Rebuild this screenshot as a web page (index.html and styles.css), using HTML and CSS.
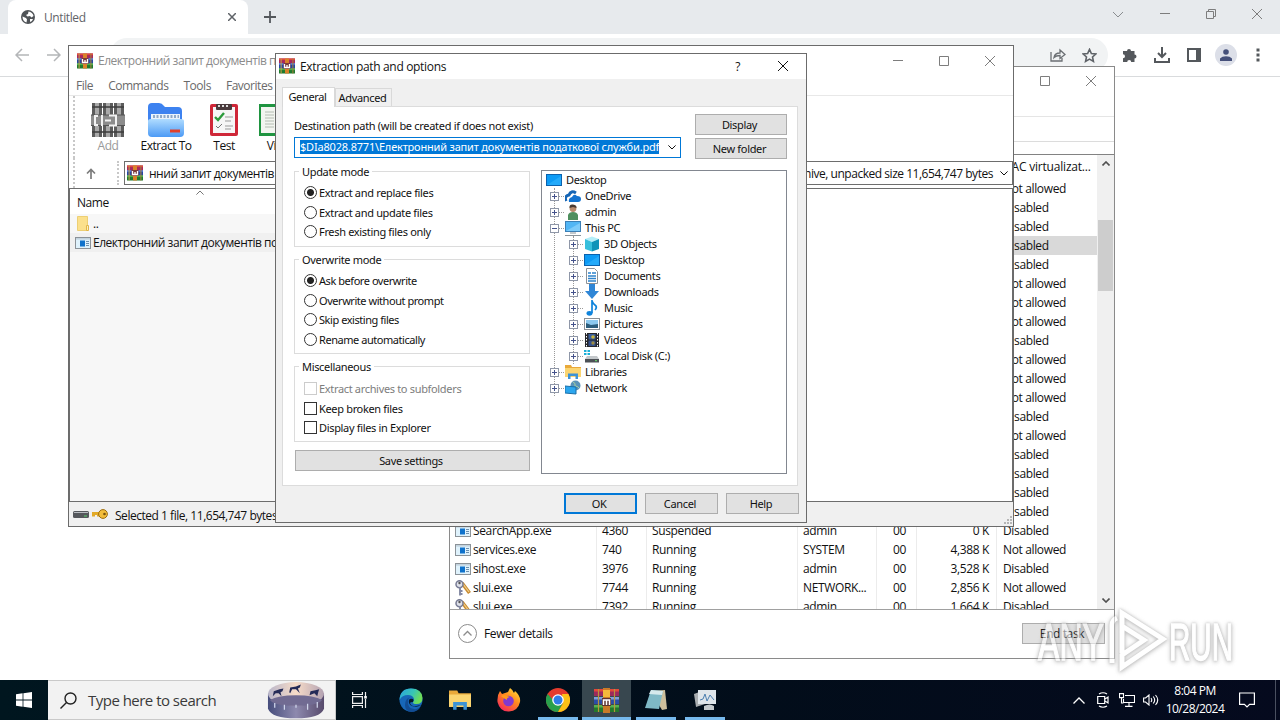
FILE: index.html
```html
<!DOCTYPE html>
<html lang="en">
<head>
  <meta charset="UTF-8">
  <title>Desktop</title>
  <link rel="stylesheet" href="styles.css">
</head>
<body>

  <!-- shared icons -->
  <svg class="defs" width="0" height="0">
    <symbol id="rar" viewBox="0 0 16 16">
      <rect width="16" height="5" y="0.5" fill="#a8285e"/><rect width="16" height="1.6" y="0.5" fill="#e04a3c"/>
      <rect width="16" height="5" y="5.5" fill="#2746a0"/><rect width="16" height="1.3" y="5.5" fill="#4f7fe0"/>
      <rect width="16" height="5" y="10.5" fill="#1f7a2e"/><rect width="16" height="1.6" y="10.5" fill="#4bb04c"/>
      <rect x="1.6" y="0.5" width="1" height="15" fill="#c9a24a"/>
      <rect x="13.4" y="0.5" width="1" height="15" fill="#a8823a"/>
      <rect x="6" y="0.5" width="4" height="15" fill="#d9822a"/>
      <rect x="4.500" y="5" width="7" height="6" fill="#7c3a3a"/>
      <path d="M5.500 6v3.500h5V6M8 7v2.500" fill="none" stroke="#fff" stroke-width="1.300"/>
    </symbol>
    <symbol id="exe" viewBox="0 0 16 12">
      <rect x=".5" y=".5" width="15" height="11" fill="#dff2fc" stroke="#8b9298"/>
      <rect x="1" y="1" width="14" height="1.6" fill="#c3d3de"/>
      <rect x="5" y="3.5" width="5" height="6" fill="#0f72cc"/>
      <path d="M11 4.5h3M11 6.5h3M11 8.5h3" stroke="#6d8fae"/>
    </symbol>
    <symbol id="keys" viewBox="0 0 16 16">
      <path d="M7 3l7.500 10" stroke="#c98a2e" stroke-width="3.600"/><path d="M8 4l6 8" stroke="#f0cf8c" stroke-width="1.200"/>
      <circle cx="4.500" cy="4.200" r="3.500" fill="#dfe1ea" stroke="#777b94" stroke-width="1.500"/><circle cx="4.500" cy="3" r="1.200" fill="#555"/>
      <path d="M5 7v8.500M5 11h2.500M5 14h2.500" stroke="#8388a3" stroke-width="1.900"/>
    </symbol>
    <symbol id="min" viewBox="0 0 10 10"><path d="M0 4.500h10" stroke="currentColor"/></symbol>
    <symbol id="max" viewBox="0 0 10 10"><path d="M.5.5h9v9h-9z" fill="none" stroke="currentColor"/></symbol>
    <symbol id="close" viewBox="0 0 10 10"><path d="M0 0l10 10M10 0L0 10" stroke="currentColor"/></symbol>
    <symbol id="down" viewBox="0 0 8 5"><path d="M.4.4L4 4 7.600.4" fill="none" stroke="currentColor"/></symbol>
    <symbol id="up" viewBox="0 0 8 5"><path d="M.4 4.600L4 1l3.600 3.600" fill="none" stroke="currentColor"/></symbol>
    <symbol id="monitor" viewBox="0 0 16 16"><rect x=".5" y="2.500" width="15" height="11" fill="#0d9bf5" stroke="#0b62ae"/><path d="M1 13L15 4v9z" fill="#24aafa"/></symbol>
    <symbol id="explorer" viewBox="0 0 16 16">
      <path d="M0 1h6l1 2h9v10H0z" fill="#e9a93a"/><path d="M0 4h16v9H0z" fill="#fbd571"/>
      <path d="M3 15V9.500h10V15h-2.500v-3h-5v3z" fill="#3d93d6"/>
    </symbol>
  </svg>

  <div class="desktop">

    <div class="browser">
      <div class="tabstrip">
        <div class="tab">
          <svg width="14" height="14" viewBox="0 0 14 14"><circle cx="7" cy="7" r="7" fill="#4f5357"/><path d="M1.500 6.500L5 8l1 1.500-.5 3C3 12 1.500 9.500 1.500 6.500zM7.500 1.500c2.500.2 4.700 2 5 4.500L10.500 7.500 9 6 6.500 6.500 5 5l2-1zM9 9h3c-.5 1.500-1.500 2.500-3 3z" fill="#fff"/></svg>
          <span>Untitled</span>
          <svg class="tab-close" width="8" height="8" viewBox="0 0 10 10"><path d="M0 0l10 10M10 0L0 10" stroke="#5f6368" stroke-width="1.900"/></svg>
        </div>
        <svg class="tab-new" width="12" height="12" viewBox="0 0 12 12"><path d="M6 0v12M0 6h12" stroke="#54585c" stroke-width="1.800"/></svg>
        <div class="controls">
          <svg width="12" height="7" viewBox="0 0 12 7"><path d="M1 1l5 5 5-5" fill="none" stroke="#8a8d90"/></svg>
          <svg width="10" height="10"><use href="#min"/></svg>
          <svg width="10" height="10" viewBox="0 0 10 10"><path d="M.5 2.500h7v7h-7zM2.500 2.500v-2h7v7h-2" fill="none" stroke="currentColor"/></svg>
          <svg width="10" height="10"><use href="#close"/></svg>
        </div>
      </div>
      <div class="toolbar">
        <svg class="nav" width="14" height="14" viewBox="0 0 14 14"><path d="M14 7H1.500M7 1L1 7l6 6" fill="none" stroke="#b4b6b8" stroke-width="1.500"/></svg>
        <svg class="nav" width="14" height="14" viewBox="0 0 14 14"><path d="M0 7h12.500M7 1l6 6-6 6" fill="none" stroke="#b4b6b8" stroke-width="1.500"/></svg>
        <div class="omnibox">
          <svg width="16" height="14" viewBox="0 0 16 14"><path d="M1 4v9h11v-3M4 9.500c.5-3 2.500-4.500 6-4.500V2l5 4.500-5 4V7.500C7 7.500 5.500 8 4 9.500z" fill="none" stroke="#6b6f73" stroke-width="1.300"/></svg>
          <svg width="15" height="15" viewBox="0 0 16 16"><path d="M8 1.500l2 4.400 4.800.5-3.600 3.200 1 4.700L8 11.900l-4.200 2.400 1-4.700L1.200 6.400 6 5.900z" fill="none" stroke="#5f6368" stroke-width="1.700"/></svg>
        </div>
        <svg class="ext" width="15" height="15" viewBox="0 0 15 15"><path d="M5 3a2 2 0 0 1 4 0h3.500v3.500a2 2 0 0 1 0 4V14H9.200a2 2 0 0 0-4 0H1v-3.800a2 2 0 0 0 0-4V3z" fill="#54585c"/></svg>
        <svg class="dl" width="16" height="16" viewBox="0 0 16 16"><path d="M8 0v10M4 6l4 4 4-4M1 11v4h14v-4" fill="none" stroke="#54585c" stroke-width="2"/></svg>
        <svg class="side" width="14" height="14" viewBox="0 0 14 14"><path d="M1 1h12v12H1z" fill="#fff" stroke="#54585c" stroke-width="2"/><path d="M9 1h4v12H9z" fill="#54585c"/></svg>
        <span class="avatar"><svg width="12" height="12" viewBox="0 0 12 12"><circle cx="6" cy="3" r="2.800" fill="#45507a"/><path d="M0 12V9.500Q2 7.300 6 7.300t6 2.200V12z" fill="#45507a"/></svg></span>
        <svg class="dots" width="4" height="14" viewBox="0 0 4 14"><path d="M.5.500h3v3h-3zM.5 5.500h3v3h-3zM.5 10.500h3v3h-3z" fill="#54585c"/></svg>
      </div>
    </div>

    <div class="window taskmgr">
      <div class="tm-title">
        <svg width="10" height="10"><use href="#max"/></svg>
        <svg width="10" height="10"><use href="#close"/></svg>
      </div>
      <div class="tm-menu"></div>
      <div class="tm-tabs"></div>
      <div class="tm-body">
        <div class="tm-list">
          <div class="row head"><span class="uac">UAC virtualizat...</span></div>
          <div class="row"><span class="uac">Not allowed</span></div>
          <div class="row"><span class="uac">Disabled</span></div>
          <div class="row"><span class="uac">Disabled</span></div>
          <div class="row selected"><span class="uac">Disabled</span></div>
          <div class="row"><span class="uac">Disabled</span></div>
          <div class="row"><span class="uac">Not allowed</span></div>
          <div class="row"><span class="uac">Not allowed</span></div>
          <div class="row"><span class="uac">Not allowed</span></div>
          <div class="row"><span class="uac">Disabled</span></div>
          <div class="row"><span class="uac">Not allowed</span></div>
          <div class="row"><span class="uac">Not allowed</span></div>
          <div class="row"><span class="uac">Not allowed</span></div>
          <div class="row"><span class="uac">Disabled</span></div>
          <div class="row"><span class="uac">Not allowed</span></div>
          <div class="row"><span class="uac">Disabled</span></div>
          <div class="row"><span class="uac">Disabled</span></div>
          <div class="row"><span class="uac">Disabled</span></div>
          <div class="row"><span class="uac">Disabled</span></div>
          <div class="row"><span><svg width="16" height="12"><use href="#exe"/></svg><b>SearchApp.exe</b></span><span>4360</span><span>Suspended</span><span>admin</span><span>00</span><span>0 K</span><span class="uac">Disabled</span></div>
          <div class="row"><span><svg width="16" height="12"><use href="#exe"/></svg><b>services.exe</b></span><span>740</span><span>Running</span><span>SYSTEM</span><span>00</span><span>4,388 K</span><span class="uac">Not allowed</span></div>
          <div class="row"><span><svg width="16" height="12"><use href="#exe"/></svg><b>sihost.exe</b></span><span>3976</span><span>Running</span><span>admin</span><span>00</span><span>3,528 K</span><span class="uac">Disabled</span></div>
          <div class="row"><span><svg width="16" height="16"><use href="#keys"/></svg><b>slui.exe</b></span><span>7744</span><span>Running</span><span>NETWORK...</span><span>00</span><span>2,856 K</span><span class="uac">Not allowed</span></div>
          <div class="row"><span><svg width="16" height="16"><use href="#keys"/></svg><b>slui.exe</b></span><span>7392</span><span>Running</span><span>admin</span><span>00</span><span>1,664 K</span><span class="uac">Disabled</span></div>
        </div>
        <div class="scrollbar">
          <svg width="8" height="5" viewBox="0 0 8 5"><path d="M.5 4.500L4 1l3.500 3.500" fill="none" stroke="#505050" stroke-width="1.600"/></svg>
          <div class="thumb"></div>
          <svg width="8" height="5" viewBox="0 0 8 5"><path d="M.5.500L4 4 7.500.5" fill="none" stroke="#505050" stroke-width="1.600"/></svg>
        </div>
      </div>
      <div class="tm-footer">
        <svg width="19" height="19" viewBox="0 0 19 19"><circle cx="9.500" cy="9.500" r="9" fill="none" stroke="#8c8c8c"/><path d="M5.500 11.500l4-4 4 4" fill="none" stroke="#8c8c8c" stroke-width="1.300"/></svg>
        <span>Fewer details</span>
        <button class="btn end-task">End task</button>
      </div>
    </div>

    <div class="window winrar">
      <div class="wr-title">
        <svg width="16" height="16"><use href="#rar"/></svg>
        <span>Електронний запит документів податкової служби.pdf</span>
        <div class="controls">
          <svg width="10" height="10"><use href="#min"/></svg>
          <svg width="10" height="10"><use href="#max"/></svg>
          <svg width="10" height="10"><use href="#close"/></svg>
        </div>
      </div>
      <div class="wr-menu"><span>File</span><span>Commands</span><span>Tools</span><span>Favorites</span></div>
      <div class="wr-tools">
        <div class="tool disabled">
          <svg width="34" height="34" viewBox="0 0 34 34">
            <path d="M1 0h10v34H1zM12 0h10v34H12zM23 0h10v34H23z" fill="#5c5c5c"/>
            <path d="M4 0h4v34H4zM15 0h4v34h-4zM26 0h4v34h-4z" fill="#a9a9a9"/>
            <path d="M1 4h32M1 29h32" stroke="#3c3c3c" stroke-width="1.500"/>
            <path d="M0 12h34v11H0z" fill="#8c8c8c"/><path d="M0 12h34M0 22.500h34" stroke="#555"/>
            <path d="M7 13H4v9h3M11 12v11M14 17.500h6M18 12.500h7v10h-7" fill="none" stroke="#f2f2f2" stroke-width="2"/>
          </svg>
          <span>Add</span>
        </div>
        <div class="tool">
          <svg width="36" height="34" viewBox="0 0 36 34">
            <defs><linearGradient id="fold" x2="0" y2="1"><stop stop-color="#b0dcff"/><stop offset="1" stop-color="#4c9af5"/></linearGradient></defs>
            <path d="M0 4q0-4 4-4h7q3 0 5 3l1 1h13q4 0 4 4v12H0z" fill="#3d82f0"/>
            <path d="M3 11h29v9H3z" fill="#eaf3fb"/><path d="M5 13.500h26" stroke="#8fa9c9" stroke-width="3" stroke-dasharray="2 1.500"/>
            <path d="M0 18q0-2 3-2h30q3 0 3 2v12q0 4-4 4H4q-4 0-4-4z" fill="url(#fold)"/>
            <path d="M22 26.500h10v3H22z" fill="#e0402c"/>
          </svg>
          <span>Extract To</span>
        </div>
        <div class="tool">
          <svg width="28" height="34" viewBox="0 0 28 34">
            <rect y="1" width="28" height="32" rx="2" fill="#cf2738"/><rect x="3" y="4" width="22" height="26" fill="#f6f6f6"/>
            <rect x="6" y="1" width="16" height="6" rx="1" fill="#4a3a3c"/><path d="M8 3h12" stroke="#ddd" stroke-width="2" stroke-dasharray="2 2"/>
            <path d="M5 14l3 3 6-7" fill="none" stroke="#2c9b3c" stroke-width="2.400"/>
            <path d="M15 14h8M15 18h6M15 23h8M15 26h6" stroke="#999"/><path d="M6 23l2 2 4-4" fill="none" stroke="#777"/>
          </svg>
          <span>Test</span>
        </div>
        <div class="tool narrow">
          <svg width="36" height="34" viewBox="0 0 36 34"><path d="M0 1h36v32H0z" fill="#1f9440"/><path d="M2 4h15v26H2zM19 4h15v26H19z" fill="#f3f5f0"/><path d="M6 9h9M6 12h9M6 15h9M6 18h9M6 21h9M6 24h9" stroke="#b4bcb2"/></svg>
          <span>View</span>
        </div>
      </div>
      <div class="wr-address">
        <svg width="10" height="11" viewBox="0 0 10 11"><path d="M5 11V1.500M1 5.500l4-4 4 4" fill="none" stroke="#7c7c7c" stroke-width="1.700"/></svg>
        <i class="sep"></i>
        <div class="path">
          <svg width="16" height="16"><use href="#rar"/></svg>
          <span class="path-left">нний запит документів</span>
          <span class="path-right">archive, unpacked size 11,654,747 bytes</span>
          <svg class="caret" width="8" height="5"><use href="#down"/></svg>
        </div>
      </div>
      <div class="wr-list">
        <svg class="sort" width="8" height="5"><use href="#up"/></svg>
        <div class="wr-head">Name</div>
        <div class="wr-col">
          <div class="file"><svg width="16" height="16" viewBox="0 0 16 16"><path d="M2.500.5h10v14h-10z" fill="#fbe08c" stroke="#edcf74"/><path d="M11.500 9.500h2v5h-2z" fill="#fff0b8" stroke="#e0b54a"/></svg>..</div>
          <div class="file picked"><svg width="16" height="12"><use href="#exe"/></svg>Електронний запит документів податкової служби.exe</div>
        </div>
      </div>
      <div class="wr-status">
        <svg width="16" height="7" viewBox="0 0 16 7"><rect width="16" height="7" rx="1.500" fill="#55585c"/><path d="M1 1.500h14" stroke="#b9bdc2"/><path d="M11 5h3" stroke="#5bd36a"/></svg>
        <svg width="16" height="10" viewBox="0 0 16 10"><path d="M0 3h9v3H7v1.500H5V6H3v1.500H0z" fill="#e2aa28"/><circle cx="11" cy="5" r="4.400" fill="#f2bd3a" stroke="#9c6d12"/><circle cx="12.500" cy="5" r="1.300" fill="#7a5410"/></svg>
        <span>Selected 1 file, 11,654,747 bytes</span>
        <svg class="grip" width="9" height="9" viewBox="0 0 9 9"><path d="M7 0h2v2H7zM7 3h2v2H7zM7 6h2v2H7zM4 3h2v2H4zM4 6h2v2H4zM1 6h2v2H1z" fill="#b5b5b5"/></svg>
      </div>
    </div>

    <div class="window dialog">
      <div class="dlg-title">
        <svg width="16" height="16"><use href="#rar"/></svg>
        <span>Extraction path and options</span>
        <span class="help">?</span>
        <svg width="10" height="10"><use href="#close"/></svg>
      </div>
      <div class="dlg-tabs"><span class="active">General</span><span>Advanced</span></div>
      <div class="dlg-panel">
        <div class="dest">
          <div class="dest-field">
            <label>Destination path (will be created if does not exist)</label>
            <div class="combo"><span class="sel">$DIa8028.8771\Електронний запит документів податкової служби.pdf</span><svg width="8" height="5"><use href="#down"/></svg></div>
          </div>
          <div class="dest-buttons">
            <button class="btn">Display</button>
            <button class="btn">New folder</button>
          </div>
        </div>
        <div class="columns">
          <div class="options">
            <fieldset>
              <legend>Update mode</legend>
              <div class="opt"><i class="radio on"></i>Extract and replace files</div>
              <div class="opt"><i class="radio"></i>Extract and update files</div>
              <div class="opt"><i class="radio"></i>Fresh existing files only</div>
            </fieldset>
            <fieldset>
              <legend>Overwrite mode</legend>
              <div class="opt"><i class="radio on"></i>Ask before overwrite</div>
              <div class="opt"><i class="radio"></i>Overwrite without prompt</div>
              <div class="opt"><i class="radio"></i>Skip existing files</div>
              <div class="opt"><i class="radio"></i>Rename automatically</div>
            </fieldset>
            <fieldset>
              <legend>Miscellaneous</legend>
              <div class="opt off"><i class="check"></i>Extract archives to subfolders</div>
              <div class="opt"><i class="check"></i>Keep broken files</div>
              <div class="opt"><i class="check"></i>Display files in Explorer</div>
            </fieldset>
            <button class="btn save">Save settings</button>
          </div>
          <div class="tree">
            <div class="node root"><svg width="16" height="16"><use href="#monitor"/></svg><span>Desktop</span></div>
            <div class="branch">
              <div class="node"><i class="box plus"></i><svg width="16" height="16" viewBox="0 0 16 16"><path d="M1 13q-2-5 3-6 2-5 7-2" fill="none" stroke="#1565b5" stroke-width="3"/><path d="M4 14q-1-4 3-5 2-4 5-1 4 0 4 3 0 3-3 3z" fill="#1272cf"/></svg><span>OneDrive</span></div>
              <div class="node"><i class="box plus"></i><svg width="16" height="16" viewBox="0 0 16 16"><path d="M3 16V11q1-3 5-3t5 3v5z" fill="#4f8f5e"/><circle cx="8" cy="4.500" r="3.400" fill="#b98a6c"/><path d="M4.500 4Q4 0 8 .5T11.500 4L8 3z" fill="#4a3a30"/></svg><span>admin</span></div>
              <div class="node"><i class="box"></i><svg width="16" height="16" viewBox="0 0 16 16"><rect x=".5" y="1.500" width="15" height="10" fill="#52b6f5" stroke="#3c7fb5"/><path d="M1 11L15 3v8z" fill="#7dcbfa"/><path d="M0 15.500h16M5 13h6" stroke="#8a9399"/></svg><span>This PC</span></div>
              <div class="branch inner">
                <div class="node"><i class="box plus"></i><svg width="16" height="16" viewBox="0 0 16 16"><path d="M1 3l7-2.500L15 3 8 6z" fill="#b4eef8"/><path d="M1 3l7 3v9.500L1 13z" fill="#37bfdc"/><path d="M15 3L8 6v9.500l7-2.500z" fill="#0f93b8"/></svg><span>3D Objects</span></div>
                <div class="node"><i class="box plus"></i><svg width="16" height="16"><use href="#monitor"/></svg><span>Desktop</span></div>
                <div class="node"><i class="box plus"></i><svg width="16" height="16" viewBox="0 0 16 16"><path d="M2.500.5h8l3 3v12h-11z" fill="#fff" stroke="#8c9196"/><path d="M4 5h3M4 8h8M4 10.500h8M4 13h8M8 5h4" stroke="#2d82cc" stroke-width="1.300"/></svg><span>Documents</span></div>
                <div class="node"><i class="box plus"></i><svg width="16" height="16" viewBox="0 0 16 16"><path d="M5 0h6v7h4l-7 8-7-8h4z" fill="#2f86d6"/></svg><span>Downloads</span></div>
                <div class="node"><i class="box plus"></i><svg width="16" height="16" viewBox="0 0 16 16"><path d="M8 0v13M8 1q1 3 4 5 1 2-1 4" fill="none" stroke="#0f84dc" stroke-width="1.700"/><ellipse cx="5.500" cy="13.300" rx="3" ry="2.400" fill="#0f84dc"/></svg><span>Music</span></div>
                <div class="node"><i class="box plus"></i><svg width="16" height="16" viewBox="0 0 16 16"><rect x=".5" y="2.500" width="15" height="11" fill="#fff" stroke="#8c9196"/><rect x="2" y="4" width="12" height="8" fill="#8cc8ee"/><path d="M2 12V7l5 2 7-1v4z" fill="#2c5d7c"/></svg><span>Pictures</span></div>
                <div class="node"><i class="box plus"></i><svg width="16" height="16" viewBox="0 0 16 16"><rect x="1" y="1" width="14" height="14" fill="#26262a"/><path d="M2.500 1v14M13.500 1v14" stroke="#fff" stroke-dasharray="1.500 1.500"/><path d="M4.500 2h7v5.500h-7z" fill="#3a5e9c"/><path d="M4.500 8.500h7V14h-7z" fill="#35508a"/><circle cx="9" cy="5" r="1.800" fill="#c9b53c"/><circle cx="9" cy="11" r="1.700" fill="#9c8c44"/></svg><span>Videos</span></div>
                <div class="node"><i class="box plus"></i><svg width="16" height="16" viewBox="0 0 16 16"><path d="M0 2h2.500v2H0zM3.500 2H6v2H3.500zM0 5h2.500v2H0zM3.500 5H6v2H3.500z" fill="#1cb0d8"/><path d="M3 8h10l2 3H1z" fill="#c4c8cb"/><path d="M1 11h14v3.500H1z" fill="#4c5156"/><path d="M11 12.700h2" stroke="#68e06e"/></svg><span>Local Disk (C:)</span></div>
              </div>
              <div class="node"><i class="box plus"></i><svg width="16" height="16"><use href="#explorer"/></svg><span>Libraries</span></div>
              <div class="node last"><i class="box plus"></i><svg width="16" height="16" viewBox="0 0 16 16"><circle cx="10.500" cy="5.500" r="5" fill="#5a93b8"/><path d="M8 2q3 1 2 4 3 0 4 2" stroke="#a9d0a0" fill="none"/><path d="M0 6l11 1v7L0 13z" fill="#2ba6ee" stroke="#1b6ea8"/></svg><span>Network</span></div>
            </div>
          </div>
        </div>
      </div>
      <div class="dlg-buttons">
        <button class="btn primary">OK</button>
        <button class="btn">Cancel</button>
        <button class="btn">Help</button>
      </div>
    </div>

    <svg class="watermark" width="200" height="66" viewBox="0 0 200 66">
      <g class="wm-text">
        <text x="2" y="53" textLength="66" lengthAdjust="spacingAndGlyphs">ANY</text>
        <text x="133" y="53" textLength="64" lengthAdjust="spacingAndGlyphs">RUN</text>
      </g>
      <path d="M76 56V18q0-5 5-7M86 46V6l41 26-41 28V48l22-15-22-14" fill="none" stroke="#fff" stroke-width="5"/>
    </svg>

    <div class="taskbar">
      <div class="start"><svg width="16" height="16" viewBox="0 0 16 16"><path d="M0 2.200L6.600 1.300v6.300H0zM7.400 1.200L16 0v7.600H7.400zM0 8.400h6.600v6.300L0 13.800zM7.400 8.400H16V16l-8.600-1.200z" fill="#fff"/></svg></div>
      <div class="search">
        <svg width="17" height="17" viewBox="0 0 17 17"><circle cx="10.500" cy="6.500" r="5.500" fill="none" stroke="#222" stroke-width="1.400"/><path d="M6.500 10.500L.5 16.500" stroke="#222" stroke-width="1.400"/></svg>
        <span>Type here to search</span>
        <svg class="bowl" width="58" height="38" viewBox="0 0 60 38">
          <defs><linearGradient id="ice"><stop stop-color="#464d7c"/><stop offset=".5" stop-color="#8d89ae"/><stop offset="1" stop-color="#574a6c"/></linearGradient><linearGradient id="rim"><stop stop-color="#b9b6ca"/><stop offset=".5" stop-color="#f7dcc8"/><stop offset="1" stop-color="#b3a2b2"/></linearGradient></defs>
          <path d="M1 12v16q4 10 29 10t29-10V12z" fill="url(#ice)"/>
          <ellipse cx="30" cy="12.500" rx="29" ry="12" fill="url(#rim)"/>
          <path d="M3 19q8-5 27-5t27 5q-4 6-27 6T3 19z" fill="#716b92"/>
          <path d="M8 22v5M18 24v5M30 24v3M42 23v6M52 21v6" stroke="#cfd5ea" stroke-width="1.300"/>
          <path d="M6 15l1-5 6-2 4-1-1 3-2 1 1 4-3-3h-3zM23 11l1-5 6-1 5-2-1 3-2 1 2 5-4-4h-4l-2 4zM44 14l1-4 5-1 4-1-1 3-1 4-3-3z" fill="#252b57"/>
        </svg>
      </div>
      <div class="apps">
        <div class="app"><svg width="16" height="16" viewBox="0 0 16 16"><path d="M.6 0v2.500h9.800V0M.6 16v-2.500h9.800V16M.6 4.600h9.800v6.800H.6zM13.500 0v4M13.500 7v9" fill="none" stroke="#eee" stroke-width="1.200"/><path d="M12.200 4h2.600v2.600h-2.600z" fill="#fff"/></svg></div>
        <div class="app"><svg width="24" height="24" viewBox="0 0 24 24">
          <defs><linearGradient id="edge" x2="1" y2=".4"><stop stop-color="#2aa4e2"/><stop offset=".6" stop-color="#38c5b4"/><stop offset="1" stop-color="#6edd58"/></linearGradient></defs>
          <circle cx="12" cy="12" r="11.500" fill="#1767b8"/><path d="M.5 12Q1 .5 12 .5T23.500 10q0 6-6 6-4 0-3.500-2 1.500-1 1-3-1-4-6-4-6 0-8.500 5z" fill="url(#edge)"/>
          <path d="M9 13q-1 7 6 8 4 1 7-3-3 6-10 6-6-1-6-7t5-8q-2 1-2 4z" fill="#124d94"/><path d="M14 14q-3 0-3 1 1 5 11 2-4 3-9 1-4-2-3-6 1-2 4-1 1 1 0 3z" fill="#04182a"/></svg></div>
        <div class="app"><svg width="22" height="22"><use href="#explorer"/></svg></div>
        <div class="app"><svg width="24" height="24" viewBox="0 0 24 24">
          <defs><linearGradient id="fox" x1=".9" y1="0" x2=".2" y2="1"><stop stop-color="#ffe33c"/><stop offset=".45" stop-color="#ff8a1e"/><stop offset="1" stop-color="#f5245e"/></linearGradient></defs>
          <path d="M3 3l2 3 3-1 3-1 2-4q3 2 4 5l1-2q6 5 5 11-2 9-11 9.500T.5 14Q0 7 3 3z" fill="url(#fox)"/><circle cx="11.500" cy="13" r="5.300" fill="#8239cf"/><path d="M4 8q3-2 6 0l3 1q-4 1-3 3-5-3-6-4z" fill="#ff9a1c"/></svg></div>
        <div class="app open"><svg width="24" height="24" viewBox="0 0 24 24"><circle cx="12" cy="12" r="12" fill="#e33b2e"/><path d="M1.600 6A12 12 0 0 0 12 24l5-9-5 2z" fill="#29a04c"/><path d="M22.400 6A12 12 0 0 1 12 24l5.200-9L16 6z" fill="#fbc116"/><circle cx="12" cy="12" r="5.800" fill="#fff"/><circle cx="12" cy="12" r="4.500" fill="#2f7de8"/></svg></div>
        <div class="app open current"><svg width="25" height="25" viewBox="0 0 25 25">
          <path d="M0 1h25v7H0z" fill="#9c2a5c"/><path d="M0 1h25v2.500H0z" fill="#e2473a"/><path d="M0 9h25v7H0z" fill="#2c4da6"/><path d="M0 9h25v2.500H0z" fill="#7f9fd8"/><path d="M0 17h25v7H0z" fill="#23782c"/><path d="M0 17h25v2.500H0z" fill="#55b14e"/>
          <path d="M4.500 1v23M20.500 1v23" stroke="#b8943e" stroke-width="1.200"/>
          <path d="M9 0h7v25H9z" fill="#c97a28"/><path d="M9 2h7v7H9z" fill="#f3b93c"/><path d="M8 10h9v8H8z" fill="#5d3330"/>
          <path d="M9.500 17v-5h6v5M12.500 12v5" fill="none" stroke="#fff" stroke-width="1.500"/></svg></div>
        <div class="app open"><svg width="24" height="22" viewBox="0 0 24 22"><path d="M7 2l14-1 2 19-5 1z" fill="#cdbf9c"/><path d="M7 1l12 1-4 18L1 19z" fill="#7fb9c6"/><path d="M7 1l12 1-1 4L5 5z" fill="#d5e9ec"/></svg></div>
        <div class="app open"><svg width="24" height="22" viewBox="0 0 24 22"><path d="M1 5l8-3 3 13-9 3z" fill="#a9adb0"/><path d="M5 1h18v14H5z" fill="#dfe5ea"/><path d="M7 11l3-1 2-5 2 7 3-6 4 5" fill="none" stroke="#4c7fb0"/><path d="M11 17q6-3 10 0v4H11z" fill="#c5cacd"/></svg></div>
      </div>
      <div class="tray">
        <svg width="12" height="7" viewBox="0 0 12 7"><path d="M.5 6.500L6 1l5.500 5.500" fill="none" stroke="#fff" stroke-width="1.300"/></svg>
        <svg width="12" height="16" viewBox="0 0 12 16"><path d="M.7 4.500h7v7h-7zM8 7l3-2v6L8 9M2 2q4-2.500 8 0M2 14q4 2.500 8 0" fill="none" stroke="#fff" stroke-width="1.200"/></svg>
        <svg width="16" height="14" viewBox="0 0 16 14"><path d="M6 2.500h9.500v7H4.500V6M10 10v3M6 13.400h7.500M.5.600h4v4h-4zM2.500 5v5h2" fill="none" stroke="#fff" stroke-width="1.100"/></svg>
        <svg width="16" height="12" viewBox="0 0 16 12"><path d="M.6 4h2L6 1v10L2.600 8h-2zM8 4q1.500 2 0 4M10.200 2.500q3 3.500 0 7M12.500 1q4.500 5 0 10" fill="none" stroke="#fff" stroke-width="1.100"/></svg>
        <div class="clock"><span>8:04 PM</span><span>10/28/2024</span></div>
        <svg width="16" height="16" viewBox="0 0 16 16"><path d="M.6 1h14.800v11.400h-4.800L8 15l-2.600-2.600H.6z" fill="none" stroke="#fff" stroke-width="1.200"/></svg>
        <i class="peek"></i>
      </div>
    </div>
  </div>

</body>
</html>
```
FILE: styles.css
```css
* {
  box-sizing: border-box;
}

body {
  margin: 0;
  font-family: "Open Sans", "Noto Sans", sans-serif;
  font-size: 12px;
  letter-spacing: -0.4px;
  color: #111;
}

svg {
  display: block;
  flex: none;
}

.defs {
  position: absolute;
}

.desktop {
  position: relative;
  width: 1280px;
  height: 720px;
  overflow: hidden;
  background: #fff;
  display: flex;
  flex-direction: column;
  white-space: nowrap;
}

/* browser */
.browser {
  flex: 1;
}

.tabstrip {
  height: 34px;
  background: #e7eaed;
  display: flex;
  align-items: center;
  padding-left: 8px;
}

.tab {
  width: 240px;
  height: 34px;
  padding: 0 12px 0 13px;
  background: #fff;
  border-radius: 8px 8px 0 0;
  display: flex;
  align-items: center;
  gap: 9px;
  color: #5f6368;
}

.tab-close {
  margin-left: auto;
}

.tab-new {
  margin-left: 16px;
}

.controls {
  margin-left: auto;
  display: flex;
  align-items: center;
  gap: 36px;
  color: #7d7d7d;
}

.tabstrip .controls {
  padding: 0 18px 6px 0;
}

.toolbar {
  height: 43px;
  border-bottom: 1px solid #d9dbdd;
  display: flex;
  align-items: center;
  padding-left: 15px;
}

.nav {
  margin-right: 18px;
}

.omnibox {
  width: 998px;
  height: 34px;
  margin-left: 31px;
  border-radius: 17px;
  background: #f1f3f4;
  display: flex;
  align-items: center;
  justify-content: flex-end;
  gap: 16px;
  padding-right: 11px;
}

.ext {
  margin-left: 14px;
}

.dl {
  margin-left: 17px;
}

.side {
  margin-left: 17px;
}

.avatar {
  width: 22px;
  height: 22px;
  margin-left: 14px;
  border-radius: 50%;
  background: #dcdfe8;
  display: flex;
  align-items: center;
  justify-content: center;
}

.dots {
  margin-left: 19px;
}

/* windows */
.window {
  position: absolute;
  display: flex;
  flex-direction: column;
  background: #fff;
  border: 1px solid #6b6b6b;
}

.btn {
  padding: 0 3px 0 0;
  height: 21px;
  font: inherit;
  letter-spacing: inherit;
  color: #111;
  background: #e1e1e1;
  border: 1px solid #adadad;
}

/* task manager */
.taskmgr {
  left: 449px;
  top: 66px;
  width: 666px;
  height: 593px;
  border-color: #8a8a8a;
}

.tm-title {
  height: 28px;
  display: flex;
  align-items: center;
  justify-content: flex-end;
  gap: 36px;
  padding-right: 18px;
  color: #7d7d7d;
}

.tm-menu {
  height: 22px;
  border-bottom: 1px solid #e5e5e5;
}

.tm-tabs {
  height: 25px;
  border-bottom: 1px solid #dcdcdc;
}

.tm-body {
  height: 456px;
  margin-top: 12px;
  border-top: 1px solid #828282;
  border-bottom: 1px solid #a0a0a0;
  display: flex;
  overflow: hidden;
}

.tm-list {
  width: 647px;
  letter-spacing: -0.36px;
}

.row {
  height: 19px;
  line-height: 20px;
  display: grid;
  grid-template-columns: 147px 50px 151px 79px 40px 80px 1fr;
}

.row.head {
  height: 24px;
  line-height: 24px;
  letter-spacing: -0.2px;
}

.row.selected {
  background: #d9d9d9;
}

.row span {
  height: 19px;
  padding-left: 5px;
  border-right: 1px solid #ececec;
}

.row span:nth-child(5),
.row span:nth-child(6) {
  text-align: right;
  padding-right: 7px;
}

.row span:nth-child(5) {
  padding-right: 10px;
}

.row span:first-child {
  display: flex;
  align-items: center;
  gap: 2px;
}

.row b {
  font-weight: normal;
}

.row .uac.uac {
  display: block;
  grid-column: 7;
  padding-left: 6px;
  text-align: left;
  border: 0;
}

.scrollbar {
  width: 17px;
  background: #f0f0f0;
  display: flex;
  flex-direction: column;
  align-items: center;
  padding: 6px 0;
}

.thumb {
  width: 15px;
  height: 71px;
  margin: 54px 0 auto;
  background: #cdcdcd;
}

.tm-footer {
  flex: 1;
  display: flex;
  align-items: center;
  padding: 0 9px 1px 8px;
  gap: 7px;
}

.end-task {
  width: 83px;
  margin-left: auto;
}

/* archive manager */
.winrar {
  left: 68px;
  top: 45px;
  width: 946px;
  height: 482px;
  letter-spacing: -0.47px;
}

.wr-title {
  height: 29px;
  display: flex;
  align-items: center;
  padding: 0 18px 0 8px;
  color: #8c8c8c;
}

.wr-title > svg {
  margin-right: 5px;
}

.wr-menu {
  height: 21px;
  border-bottom: 1px solid #e8e8e8;
  display: flex;
  align-items: center;
  gap: 15px;
  padding: 1px 0 0 7px;
  color: #6a6a6a;
}

.wr-tools {
  height: 62px;
  display: flex;
  margin-left: 4px;
  padding: 7px 0 0 4px;
  border-left: 2px dotted #c8c8c8;
}

.tool {
  width: 58px;
  display: flex;
  flex-direction: column;
  align-items: center;
  line-height: 16px;
}

.tool.narrow {
  width: 48px;
}

.tool svg {
  margin-bottom: 1px;
}

.tool.disabled {
  color: #9a9a9a;
}

.tool.narrow span {
  padding-left: 4px;
}

.wr-address {
  height: 30px;
  margin-left: 4px;
  padding-left: 11px;
  border-left: 2px dotted #c8c8c8;
  display: flex;
  align-items: center;
}

.sep {
  height: 24px;
  margin-left: 21px;
  border-left: 2px dotted #c8c8c8;
}

.path {
  flex: 1;
  height: 24px;
  margin-left: 5px;
  border: 1px solid #6d6d6d;
  display: flex;
  align-items: center;
  padding: 0 4px 0 2px;
}

.path-left {
  margin-left: 6px;
}

.path-right {
  margin-left: auto;
  margin-right: 7px;
}

.wr-list {
  height: 314px;
  border: 1px solid #6d6d6d;
  position: relative;
}

.sort {
  position: absolute;
  left: 126px;
  top: 1px;
  color: #777;
}

.wr-head {
  height: 25px;
  line-height: 27px;
  padding-left: 7px;
}

.wr-col {
  width: 420px;
  height: 287px;
  background: #f7f7f7;
}

.file {
  height: 19px;
  display: flex;
  align-items: center;
  gap: 2px;
  padding-left: 5px;
}

.file.picked {
  background: #f0f0f0;
}

.wr-status {
  flex: 1;
  background: #f0f0f0;
  display: flex;
  align-items: center;
  padding-left: 4px;
}

.wr-status svg + svg {
  margin: 0 7px 0 3px;
}

.wr-status span {
  padding-top: 3px;
}

.wr-status .grip {
  margin: 12px 1px 0 auto;
}

/* extraction dialog */
.dialog {
  left: 275px;
  top: 53px;
  width: 532px;
  height: 470px;
  background: #f0f0f0;
  font-size: 11px;
  font-family: "Noto Sans", sans-serif;
  letter-spacing: -0.33px;
}

.dlg-title {
  height: 25px;
  background: #fff;
  display: flex;
  align-items: center;
  gap: 5px;
  padding: 0 18px 1px 3px;
  font: 12px "Open Sans", sans-serif;
}

.help {
  margin-left: auto;
  margin-right: 33px;
}

.dlg-tabs {
  height: 27px;
  display: flex;
  align-items: flex-end;
  padding-left: 6px;
}

.dlg-tabs > span {
  height: 18px;
  width: 57px;
  line-height: 17px;
  padding-right: 2px;
  text-align: center;
  background: #f0f0f0;
  border: 1px solid #d9d9d9;
  border-bottom: 0;
}

.dlg-tabs > .active {
  width: 53px;
  height: 20px;
  background: #fff;
  margin-bottom: -1px;
  z-index: 1;
}

.dlg-panel {
  width: 516px;
  height: 380px;
  margin-left: 6px;
  background: #fff;
  border: 1px solid #dcdcdc;
  padding: 7px 10px 0 11px;
}

.dest {
  display: flex;
  justify-content: space-between;
}

.dest-field {
  width: 387px;
}

.dest-field label {
  display: block;
  height: 23px;
  line-height: 23px;
  letter-spacing: -0.3px;
}

.combo {
  height: 21px;
  border: 1px solid #0078d7;
  display: flex;
  align-items: center;
  justify-content: space-between;
  padding: 0 4px 1px 5px;
  letter-spacing: -0.19px;
}

.sel {
  background: #0078d7;
  color: #fff;
  line-height: 14px;
}

.dest-buttons {
  width: 92px;
  display: flex;
  flex-direction: column;
  gap: 3px;
}

.columns {
  display: flex;
  justify-content: space-between;
  margin-top: 5px;
}

.options {
  width: 236px;
}

fieldset {
  height: 83px;
  margin: 0 0 5px;
  padding: 5px 0 0 9px;
  border: 1px solid #dcdcdc;
}

fieldset:nth-child(2) {
  height: 102px;
}

fieldset:nth-child(3) {
  padding-top: 6px;
}

legend {
  margin-left: -5px;
  padding: 1px 3px 0;
  line-height: 13px;
}

.opt {
  height: 19.5px;
  display: flex;
  align-items: center;
  gap: 2px;
}

fieldset:nth-child(2) .opt {
  letter-spacing: -0.45px;
}

.opt.off {
  color: #7d7d7d;
}

.radio,
.check {
  width: 13px;
  height: 13px;
  border: 1px solid #333;
}

.radio {
  border-radius: 50%;
}

.radio.on {
  background: radial-gradient(circle, #222 3px, #fff 4px);
}

.off .check {
  border-color: #ccc;
}

.save {
  width: 235px;
  margin: 3px 0 0 1px;
}

.tree {
  width: 246px;
  height: 304px;
  margin-top: 6px;
  padding: 1px 0 0 4px;
  border: 1px solid #828790;
}

.node {
  height: 16px;
  display: flex;
  align-items: center;
  gap: 5px;
}

.node.root {
  gap: 4px;
}

.node span {
  padding-bottom: 1px;
}

.branch {
  margin-left: 8px;
  border-left: 1px dotted #999;
}

.branch .node {
  background: repeating-linear-gradient(90deg, #999 0 1px, transparent 1px 2px) 0 8px / 9px 1px no-repeat;
}

.node .box {
  width: 9px;
  height: 9px;
  margin-left: -5px;
  border: 1px solid #8f97a8;
  background: linear-gradient(#45538c, #45538c) center / 5px 1px no-repeat #fff;
}

.node .plus {
  background: linear-gradient(#45538c, #45538c) center / 5px 1px no-repeat, linear-gradient(#45538c, #45538c) center / 1px 5px no-repeat #fff;
}

.node .box + svg {
  margin: 0 -1px 0 1px;
}

.inner {
  margin-left: 18px;
}

.dlg-buttons {
  flex: 1;
  display: flex;
  justify-content: flex-end;
  gap: 8px;
  padding: 7px 7px 0 0;
}

.dlg-buttons .btn {
  width: 73px;
}

.dlg-buttons .primary {
  border: 2px solid #0078d7;
}

/* watermark */
.watermark {
  position: absolute;
  left: 1036px;
  top: 607px;
  opacity: .55;
  filter: drop-shadow(0 0 1px #999) drop-shadow(0 1px 2px #888);
}

.wm-text {
  font: 52px "Liberation Sans", sans-serif;
  letter-spacing: 0;
  fill: #fff;
  stroke: #fff;
  stroke-width: 1.5;
}

/* taskbar */
.taskbar {
  position: relative;
  height: 40px;
  background: linear-gradient(90deg, #00161f, #020d1a 60%, #050a1e);
  display: flex;
  color: #fff;
}

.start {
  width: 48px;
  display: flex;
  align-items: center;
  justify-content: center;
}

.search {
  width: 288px;
  background: #f2f2f2;
  border: 1px solid #c9c9c9;
  border-left: 0;
  display: flex;
  align-items: center;
  gap: 11px;
  padding: 0 10px 0 12px;
  font-size: 15px;
  letter-spacing: -0.52px;
  color: #3a3a3a;
}

.bowl {
  margin-left: auto;
}

.apps {
  display: flex;
}

.app {
  width: 49px;
  display: flex;
  align-items: center;
  justify-content: center;
}

.app:first-child {
  width: 48px;
  margin-right: 2px;
}

.app.open {
  background: linear-gradient(#76b9ed, #76b9ed) center bottom / 40px 3px no-repeat;
}

.app.current {
  background: linear-gradient(#76b9ed, #76b9ed) center bottom / 100% 3px no-repeat, #38474f;
}

.tray {
  margin-left: auto;
  display: flex;
  align-items: center;
  gap: 8px;
}

.tray svg:first-child {
  margin-right: 4px;
}

.tray svg:nth-child(2) {
  margin-right: 2px;
}

.clock {
  width: 60px;
  margin: 0 6px 0 -2px;
  display: flex;
  flex-direction: column;
  align-items: center;
  line-height: 18px;
  letter-spacing: -0.5px;
}

.peek {
  width: 1px;
  height: 40px;
  margin: 0 4px 0 12px;
  background: #4a5060;
}
```
